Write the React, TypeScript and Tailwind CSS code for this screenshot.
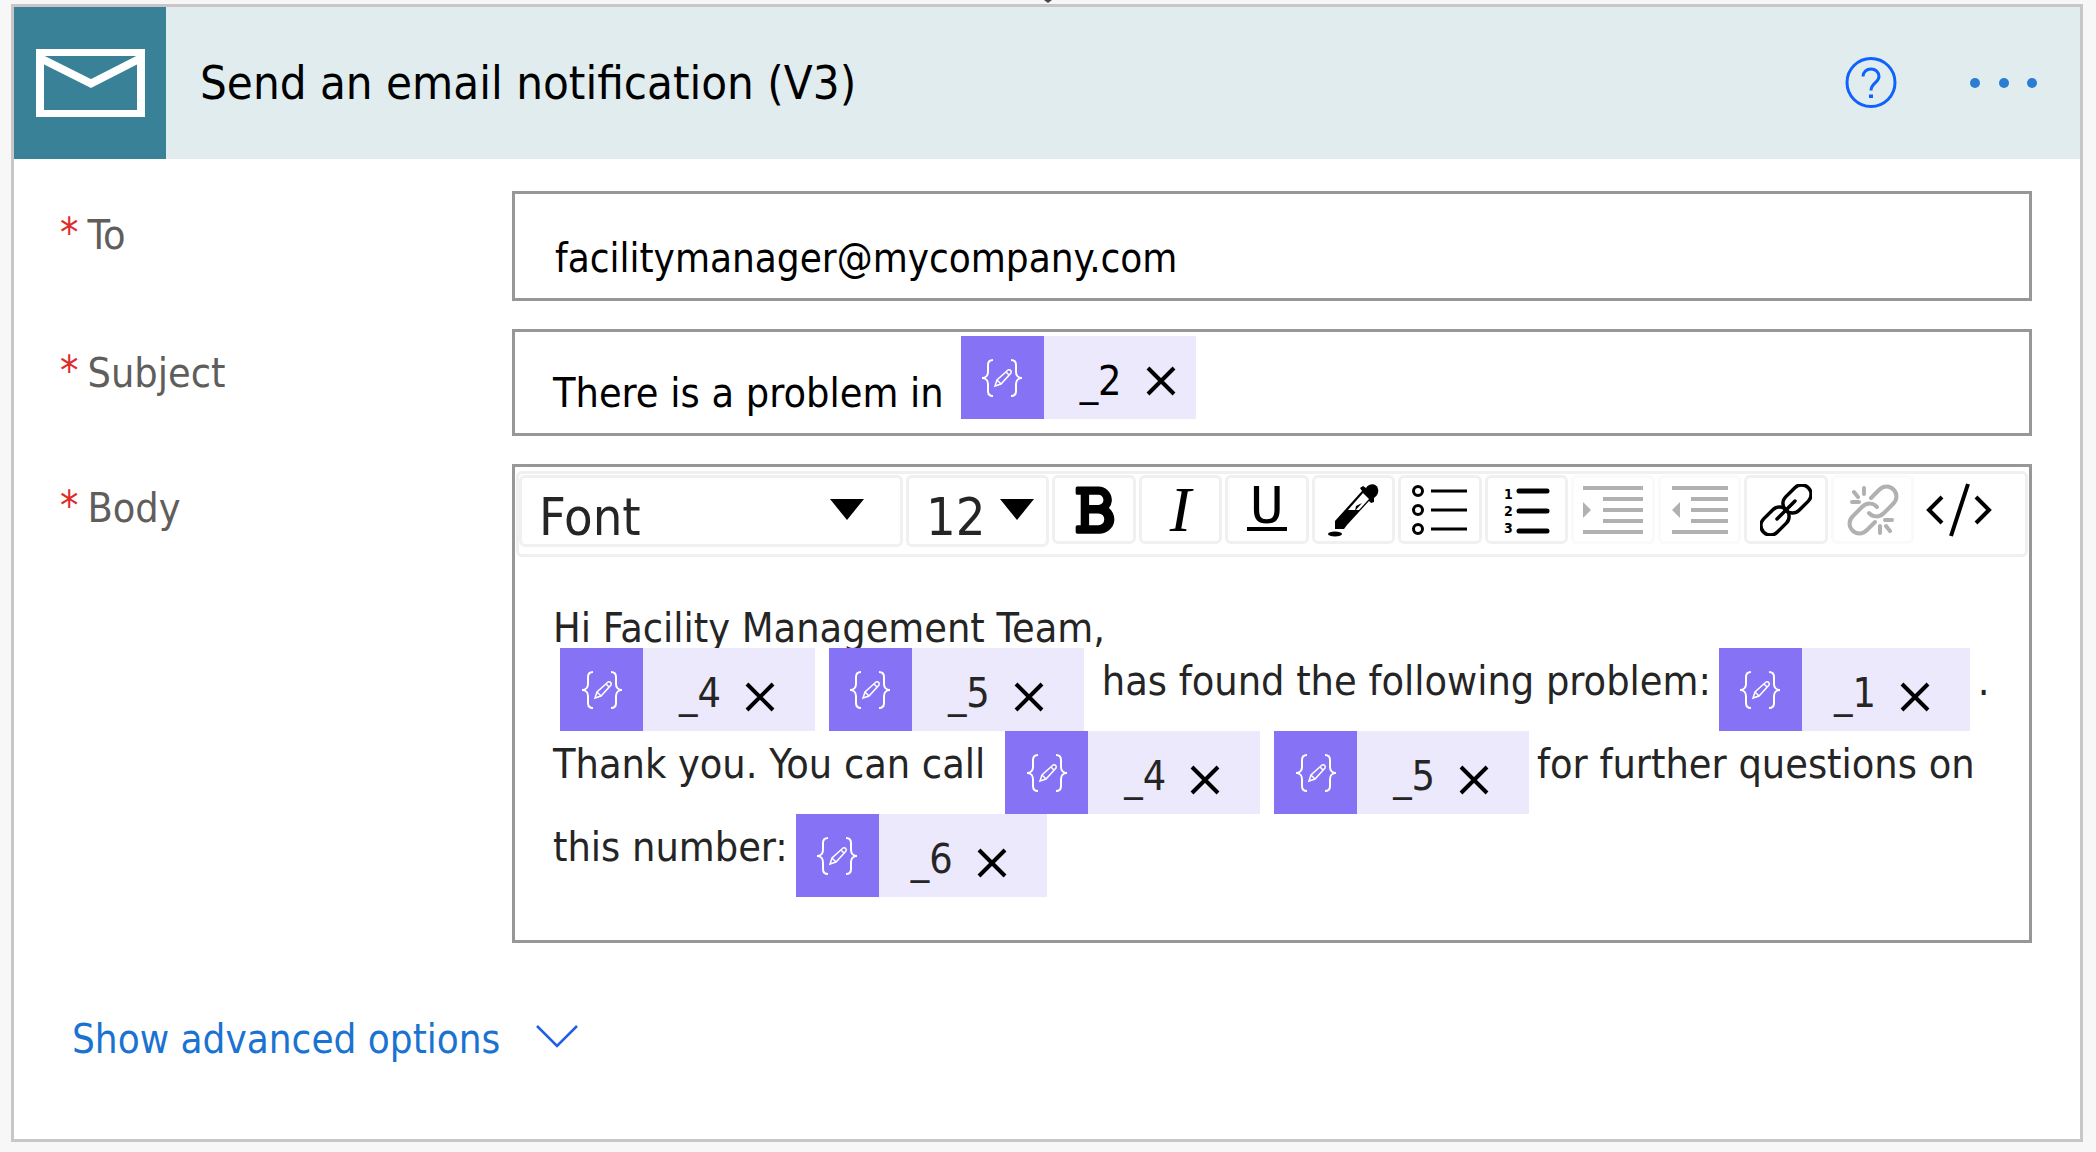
import { useState } from 'react';
import type { ReactNode } from 'react';
import { FaBold } from 'react-icons/fa';

function MailIcon() {
  return (
    <svg width="109" height="68" viewBox="0 0 109 68" fill="none" stroke="#fff" aria-hidden="true">
      <path d="M0 3.500h109M0 64.500h109" strokeWidth="7" />
      <path d="M4 0v68M105 0v68" strokeWidth="8" />
      <path d="M4 9l51 25.500L105 9" strokeWidth="8" />
    </svg>
  );
}

function HelpIcon() {
  return (
    <svg width="52" height="52" viewBox="0 0 52 52" fill="none" stroke="#0f62fe" strokeWidth="3" aria-hidden="true">
      <circle cx="26" cy="25.500" r="24" />
      <path d="M18 19.500c0-4.500 3.500-7.500 8-7.500s8 3 8 7.500c0 6-8 6.500-8 14" />
      <path d="M26 37.500v3.500" strokeWidth="4" />
    </svg>
  );
}

function DotsIcon() {
  return (
    <svg width="68" height="10" viewBox="0 0 68 10" fill="#2b7cd3" aria-hidden="true">
      <circle cx="5" cy="5" r="5" />
      <circle cx="34" cy="5" r="5" />
      <circle cx="62" cy="5" r="5" />
    </svg>
  );
}

function ExpressionIcon() {
  return (
    <svg width="42" height="38" viewBox="0 0 42 38" fill="none" stroke="#fff" strokeWidth="2" aria-hidden="true">
      <path d="M12 1C8 1 7 3 7 6v7c0 3-2 6-6 6 4 0 6 3 6 6v7c0 3 1 5 5 5" />
      <path d="M30 1c4 0 5 2 5 5v7c0 3 2 6 6 6-4 0-6 3-6 6v7c0 3-1 5-5 5" />
      <path d="M14 27l2-6 11-10c2-1 4 1 3 3L20 25zM16 21l4 4M25 13l3 3" strokeWidth="1.500" />
    </svg>
  );
}

function Token({ name, className = '', valueClass = 'pl-9 pr-10', removeClass = 'mt-[9px]' }: { name: string; className?: string; valueClass?: string; removeClass?: string }) {
  return (
    <span className={`inline-flex h-[83px] shrink-0 bg-[#ece9fd] ${className}`}>
      <span className="flex w-[83px] items-center justify-center bg-[#8672f5]">
        <ExpressionIcon />
      </span>
      <span className={`flex items-start pt-[25px] leading-10 ${valueClass}`}>
        {name}
        <button type="button" aria-label={`Remove ${name}`} className={`ml-6 ${removeClass}`}>
          <svg width="30" height="30" viewBox="0 0 30 30" stroke="#000" strokeWidth="4" aria-hidden="true">
            <path d="M2 2l26 26M28 2L2 28" />
          </svg>
        </button>
      </span>
    </span>
  );
}

function Picker({ label, value, className, caretClass }: { label: string; value: string; className: string; caretClass: string }) {
  return (
    <div className={`relative h-[72px] shrink-0 rounded-md border-3 border-[#f0f0f0] ${className}`}>
      <select aria-label={label} className="h-[60px] w-full appearance-none pl-[17px]">
        <option>{value}</option>
      </select>
      <svg width="34" height="21" viewBox="0 0 34 21" aria-hidden="true" className={`pointer-events-none absolute top-[21px] ${caretClass}`}>
        <path d="M0 0h34L17 21z" />
      </svg>
    </div>
  );
}

function Row({ id, label, children }: { id: string; label: string; children: ReactNode }) {
  return (
    <div className="flex items-start">
      <label id={`${id}-label`} htmlFor={id} className="flex w-[452px] shrink-0 gap-[9px] pt-5 text-[41px] leading-12 text-[#605e5c]">
        <span className="leading-11 text-[#e02b2b]">*</span>
        {label}
      </label>
      {children}
    </div>
  );
}

function Tool({ label, disabled = false, plain = false, children }: { label: string; disabled?: boolean; plain?: boolean; children: ReactNode }) {
  const border = plain ? 'border-transparent' : disabled ? 'border-[#fafafa]' : 'border-[#f0f0f0]';
  return (
    <button type="button" aria-label={label} disabled={disabled} className={`flex h-[69px] flex-1 items-center justify-center rounded-md border-3 ${border}`}>
      {children}
    </button>
  );
}

function Toolbar() {
  return (
    <div role="toolbar" className="mx-px mt-1 flex h-[86px] items-start gap-[3px] rounded-md border-3 border-[#f0f0f0] pt-px pr-6 text-[52px] text-[#252525]">
      <Picker label="Font" value="Font" className="w-[384px]" caretClass="right-9" />
      <Picker label="Font size" value="12" className="w-[143px]" caretClass="right-3" />

      <div className="flex flex-1 gap-[3px] text-black">
        <Tool label="Bold">
          <FaBold className="size-[54px]" aria-hidden="true" />
        </Tool>
        <Tool label="Italic">
          <span className="font-['Liberation_Serif',serif] text-[64px] leading-none italic">I</span>
        </Tool>
        <Tool label="Underline">
          <span className="h-[43px] border-b-4 border-black px-[3px] font-['Liberation_Mono',monospace] text-[56px] leading-[40px]">U</span>
        </Tool>
        <Tool label="Text colour">
          <svg width="52" height="54" viewBox="0 0 52 54" aria-hidden="true">
            <ellipse cx="8" cy="51" rx="7" ry="2.500" />
            <path d="M35 8l-2-3 3-2 3 2c3-5 11-5 12 1 1 4-1 7-4 9v4l-3 1-2-2-22 24-3 4H8v-8z" />
            <path d="M36 10l6 6-10 11H21z" fill="#fff" />
            <path d="M35 20l-7 8 1-5z" />
          </svg>
        </Tool>
        <Tool label="Bulleted list">
          <svg width="56" height="50" viewBox="0 0 56 50" fill="none" stroke="#000" strokeWidth="3" aria-hidden="true">
            <circle cx="6" cy="6" r="4.500" />
            <circle cx="6" cy="25" r="4.500" />
            <circle cx="6" cy="44" r="4.500" />
            <path d="M19 6h36M19 25h36M19 44h36" />
          </svg>
        </Tool>
        <Tool label="Numbered list">
          <svg width="46" height="50" viewBox="0 0 46 50" aria-hidden="true">
            <g fontSize="14" fontWeight="700">
              <text x="0" y="14">1</text>
              <text x="0" y="31">2</text>
              <text x="0" y="48">3</text>
            </g>
            <path d="M15 6h28M15 26h28M15 46h28" stroke="#000" strokeWidth="5" strokeLinecap="round" />
          </svg>
        </Tool>
        <Tool label="Indent" disabled>
          <svg width="60" height="50" viewBox="0 0 60 50" stroke="#b1b1b1" strokeWidth="4" aria-hidden="true">
            <path d="M0 3h60M20 14h40M20 25h40M20 36h40M0 47h60" />
            <path d="M0 17l8 8-8 8z" fill="#b1b1b1" stroke="none" />
          </svg>
        </Tool>
        <Tool label="Outdent" disabled>
          <svg width="56" height="50" viewBox="0 0 56 50" stroke="#b1b1b1" strokeWidth="4" aria-hidden="true">
            <path d="M0 3h56M19 14h37M19 25h37M19 36h37M0 47h56" />
            <path d="M8 17l-8 8 8 8z" fill="#b1b1b1" stroke="none" />
          </svg>
        </Tool>
        <Tool label="Insert link">
          <svg width="52" height="52" viewBox="0 0 52 52" fill="none" stroke="#000" strokeWidth="3.500" strokeLinecap="round" aria-hidden="true">
            <rect x="-16" y="-9.500" width="32" height="19" rx="9.500" transform="translate(37 15) rotate(-45)" />
            <rect x="-16" y="-9.500" width="32" height="19" rx="9.500" transform="translate(15 37) rotate(-45)" />
            <path d="M17 35l18-18" />
          </svg>
        </Tool>
        <Tool label="Remove link" disabled>
          <svg width="52" height="52" viewBox="0 0 52 52" fill="none" stroke="#b1b1b1" strokeWidth="4" strokeLinecap="round" aria-hidden="true">
            <path d="M24 14l8-8c10-10 24 4 14 14l-9 9c-5 5-12 4-15 0" />
            <path d="M28 38l-8 8c-10 10-24-4-14-14l9-9c5-5 12-4 15 0" />
            <path d="M17 4v6M7 8l4 5M5 18h7M33 42v7M39 42l4 5M38 36h7" />
          </svg>
        </Tool>
        <Tool label="Code view" plain>
          <svg width="66" height="54" viewBox="0 0 66 54" fill="none" stroke="#000" strokeWidth="4" aria-hidden="true">
            <path d="M16 14L3 27l13 13M50 14l13 13-13 13M42 1L25 53" />
          </svg>
        </Tool>
      </div>
    </div>
  );
}

export default function App() {
  const [to, setTo] = useState('facilitymanager@mycompany.com');

  return (
    <div className="relative min-h-screen bg-[#f7f7f7] pt-1 pr-[13px] pb-2 pl-[11px] font-['DejaVu_Sans_Condensed','DejaVu_Sans',sans-serif]">
      {/* tip of the arrow coming from the previous step */}
      <svg width="8" height="3" viewBox="0 0 8 3" fill="#484644" aria-hidden="true" className="absolute top-0 left-1/2 -translate-x-1/2">
        <path d="M0 0h8L4 3z" />
      </svg>
      <main className="min-h-[1138px] border-3 border-[#c8c6c6] bg-white">
        <header className="flex h-[152px] items-center bg-[#e1ecee]">
          <div className="flex h-full w-[152px] shrink-0 items-center justify-center bg-[#388196]">
            <MailIcon />
          </div>
          <h1 className="ml-[34px] flex-1 text-[47px] text-black">Send an email notification (V3)</h1>
          <button type="button" aria-label="Help">
            <HelpIcon />
          </button>
          <button type="button" aria-label="More" className="mr-[42px] ml-[73px]">
            <DotsIcon />
          </button>
        </header>

        <form className="pt-8 pr-12 pb-12 pl-[46px]">
          <Row id="to" label="To">
            <input
              id="to"
              value={to}
              onChange={(e) => setTo(e.target.value)}
              className="h-[110px] min-w-0 flex-1 border-3 border-[#979797] pt-6 pl-10 text-[40px] text-black"
            />
          </Row>

          <div className="mt-7">
            <Row id="subject" label="Subject">
              <div id="subject" role="textbox" aria-labelledby="subject-label" className="flex h-[107px] min-w-0 flex-1 items-start border-3 border-[#979797] pt-1 pl-[38px] text-[41px] text-black">
                <span className="pt-[37px] leading-10">There is a problem in</span>
                <Token name="_2" className="ml-[17px]" valueClass="pl-9 pr-5" removeClass="mt-[5px]" />
              </div>
            </Row>
          </div>

          <div className="mt-7">
            <Row id="body" label="Body">
              <div className="min-w-0 flex-1 border-3 border-[#979797]">
                <Toolbar />
                <div id="body" role="textbox" aria-multiline="true" aria-labelledby="body-label" className="pt-[51px] pb-[43px] pl-[38px] text-[41px] leading-10 text-[#252525]">
                  <p>Hi Facility Management Team,</p>
                  <div className="flex">
                    <Token name="_4" className="ml-[7px]" />
                    <Token name="_5" className="ml-[14px]" />
                    <span className="ml-[18px] pt-[13px]">has found the following problem:</span>
                    <Token name="_1" className="ml-2" valueClass="pl-8 pr-10" />
                    <span className="ml-2 pt-[13px]">.</span>
                  </div>
                  <div className="flex">
                    <span className="pt-[13px]">Thank you. You can call</span>
                    <Token name="_4" className="ml-5" />
                    <Token name="_5" className="ml-[14px]" />
                    <span className="ml-2 pt-[13px]">for further questions on</span>
                  </div>
                  <div className="flex">
                    <span className="pt-[13px]">this number:</span>
                    <Token name="_6" className="ml-2" valueClass="pl-8 pr-10" />
                  </div>
                </div>
              </div>
            </Row>
          </div>

          <button type="button" className="mt-[72px] ml-3 flex items-center gap-9 text-[40px] leading-12 text-[#1a73d1]">
            Show advanced options
            <svg width="42" height="24" viewBox="0 0 42 24" fill="none" stroke="#1f5fe0" strokeWidth="2.500" aria-hidden="true" className="mb-1">
              <path d="M1 1l20 20L41 1" />
            </svg>
          </button>
        </form>
      </main>
    </div>
  );
}
